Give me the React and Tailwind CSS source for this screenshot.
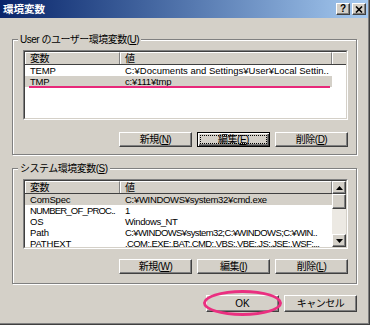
import React from 'react';

// [name, value, tracking of value]
const userVars = [
  ['TEMP', 'C:¥Documents and Settings¥User¥Local Settin..', 'tracking-[0px]'],
  ['TMP', 'c:¥111¥tmp', 'tracking-[-0.2px]'],
];

const systemVars = [
  ['ComSpec', 'C:¥WINDOWS¥system32¥cmd.exe', 'tracking-[-0.3px]'],
  ['NUMBER_OF_PROC..', '1', 'tracking-[-0.2px]'],
  ['OS', 'Windows_NT', 'tracking-[-0.4px]'],
  ['Path', 'C:¥WINDOWS¥system32;C:¥WINDOWS;C:¥WIN..', 'tracking-[-0.6px]'],
  ['PATHEXT', '.COM;.EXE;.BAT;.CMD;.VBS;.VBE;.JS;.JSE;.WSF;...', 'tracking-[-0.6px]'],
  ['PROCESSOR_ARCH..', 'x86', 'tracking-[-0.2px]'],
];

const raised =
  'border border-t-white border-l-white border-r-[#404040] border-b-[#404040] shadow-[inset_-1px_-1px_0_#808080] bg-[#d4d0c8]';

// classic push button, label with mnemonic letter
const Button = ({ label, mnemonic, focused, className = '' }) => {
  const text = (
    <span className="text-[10px] leading-[11px] tracking-[-0.5px] whitespace-nowrap">
      {label}(<span className="underline">{mnemonic}</span>)
    </span>
  );
  if (focused) {
    return (
      <div className={`flex h-[15px] w-[73px] border border-black bg-[#d4d0c8] shadow-[inset_1px_1px_0_#fff,inset_-1px_-1px_0_#404040,inset_-2px_-2px_0_#808080] ${className}`}>
        <div className="m-[2px] flex flex-1 items-center justify-center border border-dotted border-black">{text}</div>
      </div>
    );
  }
  return (
    <div className={`flex h-[15px] w-[73px] items-center justify-center ${raised} ${className}`}>{text}</div>
  );
};

const HeaderCell = ({ children, w }) => (
  <div
    className={`h-[12px] ${w} shrink-0 border-t border-l border-white border-r border-r-[#808080] bg-[#d4d0c8] pl-[4px] text-[10px] leading-[11px] tracking-[-0.5px]`}
  >
    {children}
  </div>
);

const Header = () => (
  <div className="flex h-[13px] border-b border-[#404040] bg-[#d4d0c8]">
    <HeaderCell w="w-[95px]">変数</HeaderCell>
    <HeaderCell w="w-[212px]">値</HeaderCell>
    <div className="flex-1 border-t border-l border-white bg-[#d4d0c8]" />
  </div>
);

const Rows = ({ rows, selected }) => (
  <div className="flex flex-col">
    {rows.map(([name, value, track], i) => (
      <div
        key={name}
        className={`flex h-[11px] w-[307px] shrink-0 text-[9.5px] leading-[11px] tracking-[-0.2px] ${i === selected ? 'bg-[#d4d0c8]' : ''}`}
      >
        <div className={`w-[95px] shrink-0 overflow-hidden whitespace-nowrap pl-[5px] ${name.length > 12 ? 'tracking-[-0.8px]' : ''}`}>
          {name}
        </div>
        <div className={`w-[212px] shrink-0 overflow-hidden whitespace-nowrap pl-[5px] ${track}`}>{value}</div>
      </div>
    ))}
  </div>
);

const Sunken = ({ children }) => (
  <div className="relative h-[70px] border border-t-[#808080] border-l-[#808080] border-r-white border-b-white">
    <div className="flex h-full overflow-hidden border border-t-[#404040] border-l-[#404040] border-r-[#d4d0c8] border-b-[#d4d0c8] bg-white">
      {children}
    </div>
  </div>
);

const Arrow = ({ down }) => (
  <svg width="7" height="4" viewBox="0 0 7 4">
    <path d={down ? 'M0 0h7L3.5 4z' : 'M3.5 0L7 4H0z'} fill="#000" />
  </svg>
);

const Scrollbar = () => (
  <div className="flex w-[14px] shrink-0 flex-col">
    <div className={`flex h-[13px] items-center justify-center ${raised}`}>
      <Arrow />
    </div>
    <div className={`h-[15px] ${raised}`} />
    <div className="flex-1 bg-[#ece9e3]" />
    <div className={`flex h-[13px] items-center justify-center ${raised}`}>
      <Arrow down />
    </div>
  </div>
);

const GroupBox = ({ title, children, className = '' }) => (
  <div
    className={`relative border border-[#808080] pt-[10px] pl-[10px] pr-[8px] shadow-[inset_1px_1px_0_#fff,1px_1px_0_#fff] ${className}`}
  >
    <span className="absolute -top-[7px] left-[5px] bg-[#d4d0c8] px-[2px] text-[10px] leading-[13px] tracking-[-0.5px] whitespace-nowrap">
      {title}
    </span>
    {children}
  </div>
);

const App = () => {
  return (
    <div className="h-[325px] w-[370px] overflow-hidden border-r border-b border-[#404040] bg-[#d4d0c8] font-['Liberation_Sans','Noto_Sans_CJK_JP',sans-serif] text-black">
      <div className="flex h-full flex-col border-r border-b border-[#808080]">
        {/* title bar */}
        <div className="flex h-[18px] shrink-0 items-center justify-between bg-linear-to-r from-[#0a246a] to-[#a6caf0] pl-[3px] pr-[2px]">
          <span className="text-[10.5px] font-bold leading-[12px] text-white">環境変数</span>
          <div className="flex gap-[2px]">
            <div className={`flex h-[12px] w-[14px] items-center justify-center ${raised}`}>
              <span className="text-[10px] font-bold leading-[10px]">?</span>
            </div>
            <div className={`flex h-[12px] w-[14px] items-center justify-center ${raised}`}>
              <svg width="8" height="7" viewBox="0 0 8 7">
                <path d="M1 0.5l6 6M7 0.5l-6 6" stroke="#000" strokeWidth="1.6" />
              </svg>
            </div>
          </div>
        </div>

        <div className="flex flex-col pl-[12px] pr-[11px]">
          <GroupBox
            className="mt-[21px] pb-[7px]"
            title={<>User のユーザー環境変数(<span className="underline">U</span>)</>}
          >
            <Sunken>
              <div className="flex flex-1 flex-col">
                <Header />
                <Rows rows={userVars} selected={1} />
              </div>
            </Sunken>
            {/* red underline annotation */}
            <div className="pointer-events-none absolute top-[46px] left-[16px] h-[2px] w-[301px] bg-[#e8287a]" />
            <div className="mt-[12px] flex justify-end gap-[5px]">
              <Button label="新規" mnemonic="N" />
              <Button label="編集" mnemonic="E" focused />
              <Button label="削除" mnemonic="D" />
            </div>
          </GroupBox>

          <GroupBox
            className="mt-[13px] pb-[9px]"
            title={<>システム環境変数(<span className="underline">S</span>)</>}
          >
            <Sunken>
              <div className="flex w-[307px] shrink-0 flex-col">
                <div className="flex h-[13px] border-b border-[#404040] bg-[#d4d0c8]">
                  <HeaderCell w="w-[95px]">変数</HeaderCell>
                  <HeaderCell w="w-[212px]">値</HeaderCell>
                </div>
                <Rows rows={systemVars} selected={0} />
              </div>
              <Scrollbar />
            </Sunken>
            <div className="mt-[10px] flex justify-end gap-[5px]">
              <Button label="新規" mnemonic="W" />
              <Button label="編集" mnemonic="I" />
              <Button label="削除" mnemonic="L" />
            </div>
          </GroupBox>

          <div className="mt-[11px] flex justify-end gap-[5px]">
            <div className="relative">
              <div className={`flex h-[17px] w-[73px] items-center justify-center ${raised}`}>
                <span className="text-[10px] leading-[11px]">OK</span>
              </div>
              {/* circled OK annotation */}
              <div className="pointer-events-none absolute -top-[5px] -left-[3px] h-[26px] w-[79px] rounded-[50%] border-[3px] border-[#ea2f80]" />
            </div>
            <div className={`flex h-[17px] w-[73px] items-center justify-center ${raised}`}>
              <span className="text-[10px] leading-[11px] tracking-[-0.5px]">キャンセル</span>
            </div>
          </div>
        </div>
      </div>
    </div>
  );
};

export default App;
